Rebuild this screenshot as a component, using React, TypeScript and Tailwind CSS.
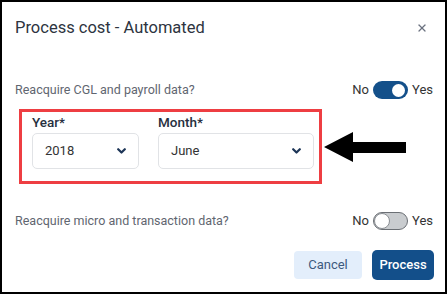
import { X } from 'lucide-react';

function Toggle({ on }: { on: boolean }) {
  return (
    <div className="flex items-center gap-[4px] text-[13px] text-[#333]">
      <span>No</span>
      {on ? (
        <div className="w-[35px] h-[18px] rounded-full bg-[#14508a] flex items-center justify-end pr-[3px]">
          <div className="w-[13px] h-[13px] rounded-full bg-white" />
        </div>
      ) : (
        <div className="w-[35px] h-[18px] rounded-full bg-[#c9cccf] border border-[#6b6f74] flex items-center">
          <div className="w-[16px] h-[16px] rounded-full bg-white border border-[#8a8e93]" />
        </div>
      )}
      <span>Yes</span>
    </div>
  );
}

function Select({ value, width }: { value: string; width: string }) {
  return (
    <div
      className={`${width} h-[36px] mt-[1px] rounded-[5px] border border-[#e1e3e6] bg-white flex items-center justify-between pl-[12px] pr-[12px] text-[13px] text-[#333]`}
    >
      <span>{value}</span>
      <svg className="w-[9px] h-[6px]" viewBox="0 0 9 6" fill="none">
        <path d="M1.2 1.2l3.3 3.3 3.3-3.3" stroke="#1d3557" strokeWidth={2.2} strokeLinecap="round" strokeLinejoin="round" />
      </svg>
    </div>
  );
}

export default function App() {
  return (
    <div className="w-[447px] h-[294px] border-2 border-black bg-white font-['Roboto',sans-serif] flex flex-col">
      {/* Header */}
      <div className="flex items-center justify-between pl-[13px] pr-[17px] pt-[14px]">
        <h1 className="text-[16.5px] leading-[24px] text-[#2d3440]">Process cost - Automated</h1>
        <X className="w-[12px] h-[12px] text-[#6b7280]" strokeWidth={2.5} />
      </div>

      {/* CGL row */}
      <div className="flex items-center justify-between pl-[13px] pr-[12px] mt-[41px] h-[18px]">
        <span className="text-[12.5px] text-[#5f6670]">Reacquire CGL and payroll data?</span>
        <Toggle on />
      </div>

      {/* Highlighted selects */}
      <div className="flex items-center pl-[17px] mt-[10px]">
        <div className="w-[303px] border-[3px] border-[#ee3e42] pl-[10px] pr-[5px] pb-[12px] flex gap-[19px]">
          <div className="flex flex-col">
            <label className="text-[13.5px] leading-[20px] font-medium text-[#263040]">Year*</label>
            <Select value="2018" width="w-[107px]" />
          </div>
          <div className="flex flex-col">
            <label className="text-[13.5px] leading-[20px] font-medium text-[#263040]">Month*</label>
            <Select value="June" width="w-[156px]" />
          </div>
        </div>
        <svg className="ml-[2px] w-[83px] h-[30px]" viewBox="0 0 83 30">
          <path d="M0 15L29 0V10H82V21H29V30Z" fill="#000" />
        </svg>
      </div>

      {/* Micro row */}
      <div className="flex items-center justify-between pl-[13px] pr-[12px] mt-[28px] h-[18px]">
        <span className="text-[12.5px] text-[#5f6670]">Reacquire micro and transaction data?</span>
        <Toggle on={false} />
      </div>

      {/* Footer */}
      <div className="flex items-center justify-end gap-[10px] pr-[11px] mt-[20px]">
        <button className="w-[68px] h-[28px] rounded-[4px] bg-[#e3eefb] text-[13px] text-[#3d5a7e]">Cancel</button>
        <button className="w-[62px] h-[30px] rounded-[5px] bg-[#134f8a] text-[13px] font-medium text-white">Process</button>
      </div>
    </div>
  );
}
